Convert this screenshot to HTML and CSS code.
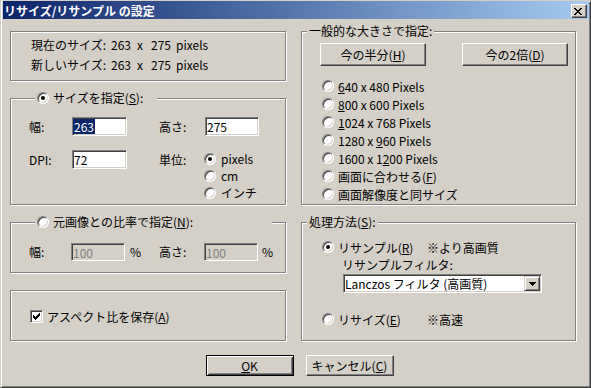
FILE: index.html
```html
<!DOCTYPE html>
<html lang="ja">
<head>
  <meta charset="UTF-8" />
  <title>リサイズ/リサンプル の設定</title>
  <link rel="stylesheet" href="styles.css">
</head>
<body>

  <div class="window">
    <div class="titlebar">
      <span class="title">リサイズ/リサンプル の設定</span>
      <span class="close">
        <svg width="8" height="7" viewBox="0 0 8 7"><path d="M0 0h2v1H0zM6 0h2v1H6zM1 1h2v1H1zM5 1h2v1H5zM2 2h4v1H2zM3 3h2v1H3zM2 4h4v1H2zM1 5h2v1H1zM5 5h2v1H5zM0 6h2v1H0zM6 6h2v1H6z"/></svg>
      </span>
    </div>

    <div class="content">
      <div class="columns">

        <div class="col col-left">
          <div class="etched info">
            <div class="info-row">
              <span class="info-label">現在のサイズ:</span><span class="num-w">263</span><span class="num-x">x</span><span class="num-h">275</span><span>pixels</span>
            </div>
            <div class="info-row">
              <span class="info-label">新しいサイズ:</span><span class="num-w">263</span><span class="num-x">x</span><span class="num-h">275</span><span>pixels</span>
            </div>
          </div>

          <div class="etched size-group">
            <div class="legend legend-size"><span class="radio on"></span><span>サイズを指定(<u>S</u>):</span></div>
            <div class="field-row">
              <span class="lbl lbl-a">幅:</span>
              <span class="edit edit-a"><span class="selected">263</span></span>
              <span class="lbl lbl-b">高さ:</span>
              <span class="edit edit-b">275</span>
            </div>
            <div class="field-row dpi-row">
              <span class="lbl lbl-a">DPI:</span>
              <span class="edit edit-a">72</span>
              <span class="lbl lbl-b lbl-unit">単位:</span>
              <div class="unit-list">
                <div class="unit"><span class="radio on"></span><span>pixels</span></div>
                <div class="unit"><span class="radio"></span><span>cm</span></div>
                <div class="unit"><span class="radio"></span><span>インチ</span></div>
              </div>
            </div>
          </div>

          <div class="etched ratio-group">
            <div class="legend legend-ratio"><span class="radio"></span><span>元画像との比率で指定(<u>N</u>):</span></div>
            <div class="field-row">
              <span class="lbl lbl-c">幅:</span>
              <span class="edit edit-off">100</span>
              <span class="pct pct-a">%</span>
              <span class="lbl lbl-d">高さ:</span>
              <span class="edit edit-off">100</span>
              <span class="pct pct-b">%</span>
            </div>
          </div>

          <div class="etched aspect">
            <span class="check">
              <svg width="7" height="7" viewBox="0 0 7 7"><path d="M6 0h1v1H6zM5 1h2v1H5zM0 2h1v1H0zM4 2h3v1H4zM0 3h2v1H0zM3 3h3v1H3zM0 4h5v1H0zM1 5h3v1H1zM2 6h1v1H2z"/></svg>
            </span>
            <span>アスペクト比を保存(<u>A</u>)</span>
          </div>
        </div>

        <div class="col col-right">
          <div class="etched preset-group">
            <div class="legend legend-preset"><span>一般的な大きさで指定:</span></div>
            <div class="preset-buttons">
              <button class="btn btn-wide">今の半分(<u>H</u>)</button>
              <button class="btn btn-wide">今の2倍(<u>D</u>)</button>
            </div>
            <div class="preset-list">
              <div class="opt"><span class="radio"></span><span><u>6</u>40 x 480 Pixels</span></div>
              <div class="opt"><span class="radio"></span><span><u>8</u>00 x 600 Pixels</span></div>
              <div class="opt"><span class="radio"></span><span><u>1</u>024 x 768 Pixels</span></div>
              <div class="opt"><span class="radio"></span><span>1280 x <u>9</u>60 Pixels</span></div>
              <div class="opt"><span class="radio"></span><span>1600 x 1<u>2</u>00 Pixels</span></div>
              <div class="opt"><span class="radio"></span><span>画面に合わせる(<u>F</u>)</span></div>
              <div class="opt"><span class="radio"></span><span>画面解像度と同サイズ</span></div>
            </div>
          </div>

          <div class="etched method-group">
            <div class="legend legend-method"><span>処理方法(<u>S</u>):</span></div>
            <div class="opt"><span class="radio on"></span><span class="method-name">リサンプル(<u>R</u>)</span><span>※より高画質</span></div>
            <div class="filter-label">リサンプルフィルタ:</div>
            <div class="combo">
              <span class="combo-text">Lanczos フィルタ (高画質)</span>
              <span class="combo-btn">
                <svg width="7" height="4" viewBox="0 0 7 4"><path d="M0 0h7v1H0zM1 1h5v1H1zM2 2h3v1H2zM3 3h1v1H3z"/></svg>
              </span>
            </div>
            <div class="opt opt-resize"><span class="radio"></span><span class="method-name">リサイズ(<u>E</u>)</span><span>※高速</span></div>
          </div>
        </div>

      </div>

      <div class="actions">
        <button class="btn btn-action btn-default"><span><u>O</u>K</span></button>
        <button class="btn btn-action"><span>キャンセル(<u>C</u>)</span></button>
      </div>
    </div>
  </div>

</body>
</html>
```

FILE: styles.css
```css
* {
  box-sizing: border-box;
}
body {
  margin: 0;
  background: #d4d0c8;
  font-family: 'Noto Sans CJK JP', 'Noto Sans', sans-serif;
  font-size: 12px;
  color: #000;
}
u {
  text-decoration: underline;
  text-underline-offset: 1px;
}
.window {
  width: 591px;
  height: 388px;
  background: #d4d0c8;
  border: 1px solid;
  border-color: #d4d0c8 #404040 #404040 #d4d0c8;
  box-shadow: inset 1px 1px #fff, inset -1px -1px #808080;
  padding: 0 1px 1px 2px;
}
.titlebar {
  height: 18px;
  display: flex;
  align-items: center;
  justify-content: space-between;
  padding: 2px 2px 0 1px;
  background: linear-gradient(90deg, #0a246a, #a6caf0);
  color: #fff;
  font-weight: 700;
  line-height: 14px;
}
.close {
  width: 16px;
  height: 14px;
  display: flex;
  align-items: flex-start;
  padding: 3px 0 0 2px;
  background: #d4d0c8;
  border: 1px solid;
  border-color: #fff #404040 #404040 #fff;
  box-shadow: inset -1px -1px #808080;
}
.close svg {
  display: block;
}
.content {
  padding: 12px 0 0 7px;
}
.columns {
  display: flex;
  gap: 15px;
}
.col {
  display: flex;
  flex-direction: column;
  gap: 17px;
}
.col-left {
  width: 276px;
}
.col-right {
  width: 275px;
}
.etched {
  position: relative;
  border: 1px solid #808080;
  box-shadow: inset 1px 1px #fff, 1px 1px #fff;
}
.legend {
  position: absolute;
  top: -8px;
  height: 14px;
  display: flex;
  align-items: center;
  gap: 4px;
  padding: 0 2px;
  background: #d4d0c8;
  line-height: 14px;
  white-space: nowrap;
}
.legend-size {
  left: 24px;
  width: 122px;
}
.legend-ratio {
  left: 24px;
  width: 237px;
}
.legend-preset {
  left: 5px;
}
.legend-method {
  left: 5px;
}

/* size info */
.info {
  height: 50px;
  padding: 3px 0 0 20px;
}
.info-row {
  display: flex;
  height: 20px;
  line-height: 20px;
}
.info-label {
  width: 80px;
}
.num-w {
  width: 26px;
}
.num-x {
  width: 14px;
}
.num-h {
  width: 25px;
}

/* edit fields */
.field-row {
  display: flex;
  align-items: flex-start;
}
.lbl {
  line-height: 19px;
}
.edit {
  display: flex;
  align-items: center;
  height: 19px;
  padding-left: 1px;
  background: #fff;
  border: 1px solid;
  border-color: #808080 #fff #fff #808080;
  box-shadow: inset 1px 1px #404040, inset -1px -1px #d4d0c8;
  line-height: 15px;
}
.selected {
  margin-left: -1px;
  padding: 0 1px;
  background: #0a246a;
  color: #fff;
}
.size-group {
  height: 107px;
  padding: 18px 0 0 18px;
}
.lbl-a {
  width: 43px;
}
.edit-a {
  width: 55px;
}
.lbl-b {
  width: 46px;
  margin-left: 32px;
}
.lbl-unit {
  width: 45px;
}
.edit-b {
  width: 54px;
}
.dpi-row {
  margin-top: 14px;
}
.unit {
  display: flex;
  align-items: center;
  gap: 5px;
  height: 17px;
}
.ratio-group {
  height: 51px;
  padding: 20px 0 0 18px;
}
.ratio-group .lbl,
.ratio-group .pct {
  line-height: 18px;
}
.edit-off {
  width: 54px;
  height: 18px;
  background: #d4d0c8;
  color: #808080;
}
.lbl-c {
  width: 42px;
}
.lbl-d {
  width: 45px;
}
.pct-a {
  width: 34px;
  padding-left: 5px;
}
.pct-b {
  padding-left: 4px;
}

/* checkbox */
.aspect {
  height: 51px;
  display: flex;
  align-items: flex-start;
  gap: 4px;
  padding: 19px 0 0 19px;
  line-height: 13px;
}
.check {
  width: 13px;
  height: 13px;
  padding: 2px;
  background: #fff;
  border: 1px solid;
  border-color: #808080 #fff #fff #808080;
  box-shadow: inset 1px 1px #404040, inset -1px -1px #d4d0c8;
}
.check svg {
  display: block;
}

/* radio */
.radio {
  position: relative;
  flex: none;
  width: 12px;
  height: 12px;
  border-radius: 50%;
  background: #fff;
  border: 1px solid;
  border-color: #808080 #fff #fff #808080;
  box-shadow: inset 1px 1px #404040, inset -1px -1px #d4d0c8;
}
.radio.on::after {
  content: "";
  position: absolute;
  left: 3px;
  top: 3px;
  width: 4px;
  height: 4px;
  border-radius: 50%;
  background: #000;
}
.opt {
  display: flex;
  align-items: center;
  gap: 4px;
  height: 18px;
  white-space: nowrap;
}

/* buttons */
.btn {
  display: flex;
  align-items: center;
  justify-content: center;
  padding: 0;
  font: inherit;
  color: #000;
  background: #d4d0c8;
  border: 1px solid;
  border-color: #fff #404040 #404040 #fff;
  box-shadow: inset -1px -1px #808080;
  line-height: 14px;
}
.btn-default {
  border-color: #000;
  box-shadow: inset 1px 1px #fff, inset -1px -1px #404040, inset 2px 2px #d4d0c8, inset -2px -2px #808080;
}
.btn-wide {
  width: 106px;
  height: 23px;
}
.btn-action {
  width: 88px;
  height: 21px;
}

/* presets */
.preset-group {
  height: 174px;
  padding: 11px 0 0 18px;
}
.preset-buttons {
  display: flex;
  gap: 36px;
}
.preset-list {
  margin-top: 11px;
  padding-left: 2px;
}

/* method */
.method-group {
  height: 119px;
  padding: 15px 0 0 20px;
}
.method-name {
  width: 85px;
}
.filter-label {
  height: 18px;
  line-height: 18px;
  padding-left: 20px;
}
.combo {
  display: flex;
  align-items: center;
  justify-content: space-between;
  width: 199px;
  height: 19px;
  margin-left: 21px;
  padding-left: 1px;
  background: #fff;
  border: 1px solid;
  border-color: #808080 #fff #fff #808080;
  box-shadow: inset 1px 1px #404040, inset -1px -1px #d4d0c8;
  line-height: 15px;
}
.combo-btn {
  display: flex;
  align-items: center;
  justify-content: center;
  width: 16px;
  height: 15px;
  margin-right: 1px;
  background: #d4d0c8;
  border: 1px solid;
  border-color: #d4d0c8 #404040 #404040 #d4d0c8;
  box-shadow: inset 1px 1px #fff, inset -1px -1px #808080;
}
.combo-btn svg {
  display: block;
}
.opt-resize {
  margin-top: 17px;
}

.actions {
  display: flex;
  justify-content: center;
  gap: 12px;
  margin-top: 14px;
}
```
